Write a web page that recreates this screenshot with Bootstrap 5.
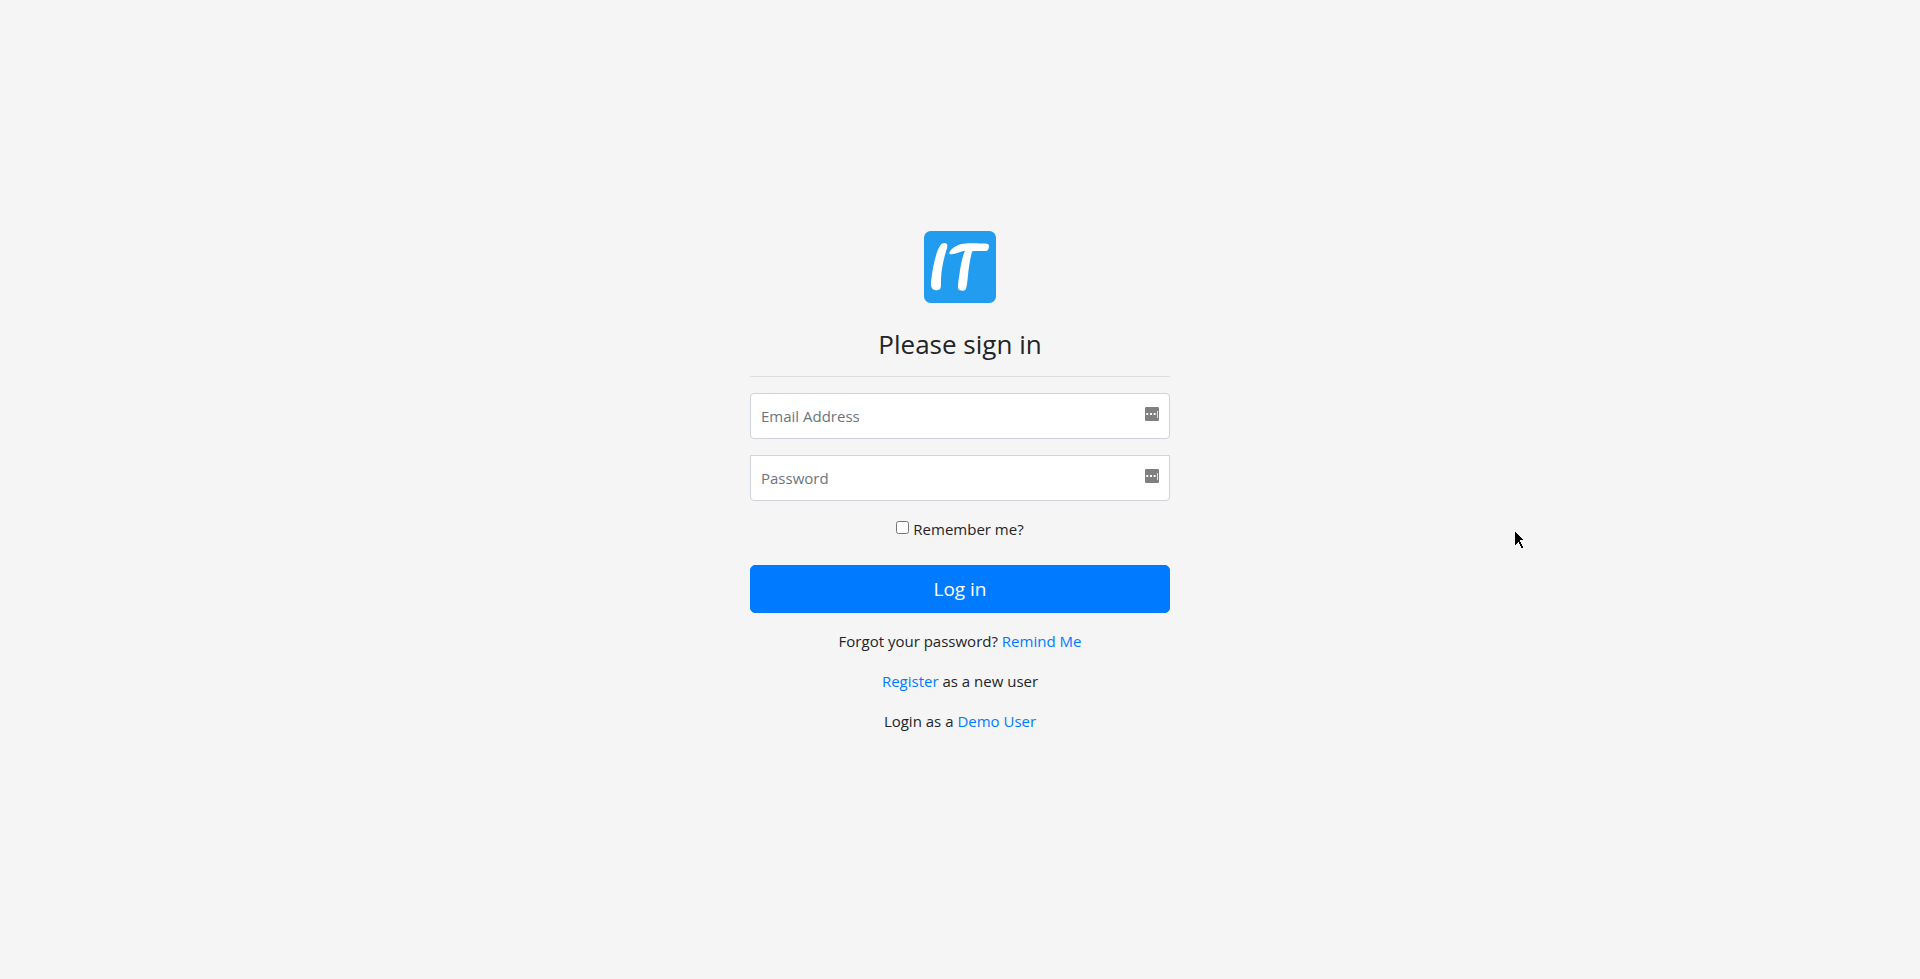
<!DOCTYPE html>
<html lang="en">
<head>
<meta charset="utf-8">
<meta name="viewport" content="width=device-width, initial-scale=1">
<title>Sign in</title>
<link href="https://cdn.jsdelivr.net/npm/bootstrap@5.3.0/dist/css/bootstrap.min.css" rel="stylesheet">
<style>
  body {
    background: #f5f5f5;
    color: #212529;
    font-family: "Segoe UI", "Open Sans", "Noto Sans", sans-serif;
    font-size: 15px;
    line-height: 24px;
  }
  a { color: #007bff; }
  .signin { max-width: 450px; padding: 0 15px; }
  .signin h1 { padding-top: 2px; font-size: 26px; line-height: 31px; font-weight: 400; }
  .signin hr { color: #000; opacity: .1; }
  .signin .form-control {
    height: 46px;
    padding: 10px;
    font-size: 15px;
    line-height: 24px;
    border-color: #ced4da;
    border-radius: 4px;
  }
  .signin .form-control::placeholder { color: #6c757d; }
  .signin .password-box { border-top-left-radius: 0; border-top-right-radius: 0; }
  .fill-icon { top: 14px; right: 11px; }
  .remember input { width: 13px; height: 13px; margin: 0 4px 2px 0; }
  .btn-login {
    --bs-btn-bg: #007bff;
    --bs-btn-border-color: #007bff;
    --bs-btn-color: #fff;
    --bs-btn-hover-bg: #0069d9;
    --bs-btn-hover-color: #fff;
    height: 48px;
    padding: 8px 16px;
    font-size: 19px;
    line-height: 30px;
    border-radius: 5px;
  }
  .pointer { left: 1515px; top: 532px; }
</style>
</head>
<body class="min-vh-100 d-flex align-items-center">
<main class="signin w-100 mx-auto text-center">
  <form>
    <svg class="d-block mx-auto mb-4" width="72" height="72" viewBox="0 0 216 216" role="img" aria-label="IT">
      <rect width="216" height="216" rx="20" fill="#219cef"/>
      <g fill="#fff">
        <path d="M49 43C55 34 67 34 70 42C71 49 66 60 62 75C57 95 52 120 51 143C51 157 52 169 48 175C42 179 30 178 25 173C20 166 20 156 22 145C27 105 35 65 49 43Z"/>
        <path d="M76 65C80 53 98 42 113 39C125 36 140 36 155 37C170 38 182 36 192 39C197 43 195 51 192 57C189 61 182 60 174 60C163 60 152 59 145 61C141 71 137 94 134 115C131 139 130 162 126 173C122 181 109 181 103 175C100 166 104 147 107 125C110 103 115 77 123 59C109 61 95 69 82 70C78 70 75 69 76 65Z"/>
      </g>
    </svg>
    <h1 class="mb-0">Please sign in</h1>
    <hr class="my-3">
    <div class="position-relative mb-3">
      <input class="form-control" type="email" id="email" placeholder="Email Address" aria-label="Email Address">
      <svg class="fill-icon position-absolute" width="14" height="14" viewBox="0 0 14 14" aria-hidden="true">
        <rect width="14" height="14" rx="1" fill="#808080"/>
        <path d="M1.3 6h1.9v2H1.3zM5 6h2v2H5zM8.7 6h1.9v2H8.7z" fill="#fff"/><path d="M12 4h1v7h-1z" fill="#ddd"/>
      </svg>
    </div>
    <div class="position-relative mb-3">
      <input class="form-control password-box" type="password" id="password" placeholder="Password" aria-label="Password">
      <svg class="fill-icon position-absolute" width="14" height="14" viewBox="0 0 14 14" aria-hidden="true">
        <rect width="14" height="14" rx="1" fill="#808080"/>
        <path d="M1.3 6h1.9v2H1.3zM5 6h2v2H5zM8.7 6h1.9v2H8.7z" fill="#fff"/><path d="M12 4h1v7h-1z" fill="#ddd"/>
      </svg>
    </div>
    <div class="remember d-flex justify-content-center align-items-center mb-4">
      <input type="checkbox" id="remember"><label for="remember">Remember me?</label>
    </div>
    <button class="btn btn-login w-100 d-block mb-3" type="submit">Log in</button>
    <p>Forgot your password? <a class="text-decoration-none" href="#">Remind Me</a></p>
    <p><a class="text-decoration-none" href="#">Register</a> as a new user</p>
    <p>Login as a <a class="text-decoration-none" href="#">Demo User</a></p>
  </form>
</main>
<svg class="pointer position-absolute" width="10" height="18" viewBox="0 0 10 18" shape-rendering="crispEdges" aria-hidden="true">
  <path d="M0 0h1v1h1v1h1v1h1v1h1v1h1v1h1v1h1v1h-3v2h1v2h1v2h1v2h-2v-2h-1v-2h-1v-2h-1v1h-1v1h-1v1h-1z"/>
</svg>
<script src="https://cdn.jsdelivr.net/npm/bootstrap@5.3.0/dist/js/bootstrap.bundle.min.js"></script>
</body>
</html>
